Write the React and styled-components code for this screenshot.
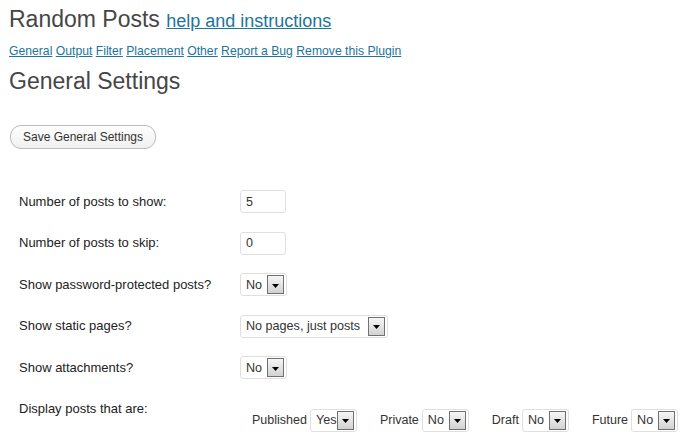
import React from 'react';
import styled, { createGlobalStyle } from 'styled-components';

const GlobalStyle = createGlobalStyle`
  body {
    margin: 0;
    background: #fff;
    font-family: "Liberation Sans", Arial, sans-serif;
    color: #333;
  }
`;

const Wrap = styled.div`
  padding: 5px 0 0 9px;
`;

const Title = styled.h2`
  margin: 0;
  font-size: 23px;
  line-height: 29px;
  font-weight: normal;
  color: #464646;
`;

const HelpLink = styled.a`
  font-size: 18px;
  color: #21759b;
  text-decoration: underline;
`;

const Nav = styled.div`
  margin-top: 7px;
  font-size: 12.2px;
  line-height: 16px;
`;

const NavLink = styled.a`
  color: #21759b;
  text-decoration: underline;
`;

const Heading = styled(Title)`
  margin-top: 8px;
`;

const SaveButton = styled.button`
  display: block;
  margin: 29px 0 0 1px;
  width: 146px;
  height: 24px;
  padding: 0;
  box-sizing: border-box;
  border: 1px solid #bbb;
  border-radius: 11px;
  background: linear-gradient(#fefefe, #f0f0f0);
  font: 12px "Liberation Sans", Arial, sans-serif;
  color: #333;
`;

const Form = styled.div`
  margin-top: 32px;
`;

const Row = styled.div`
  display: flex;
  align-items: ${p => (p.$top ? 'flex-start' : 'center')};
  height: ${p => (p.$top ? 'auto' : '41.5px')};
`;

const Label = styled.div`
  width: 231px;
  box-sizing: border-box;
  padding-left: 10px;
  padding-top: ${p => (p.$top ? '12.5px' : '0')};
  font-size: 13px;
  line-height: 16px;
  color: #222;
`;

const Control = styled.div`
  padding-top: ${p => (p.$top ? '20px' : '0')};
`;

const TextInput = styled.input`
  display: block;
  width: 46px;
  height: 23px;
  box-sizing: border-box;
  border: 1px solid #dfdfdf;
  border-radius: 3px;
  padding: 0 5px;
  font: 12.5px "Liberation Sans", Arial, sans-serif;
  color: #333;
  outline: none;
`;

const SelectBox = styled.div`
  display: inline-flex;
  align-items: center;
  box-sizing: border-box;
  width: ${p => p.$w}px;
  height: 23px;
  border: 1px solid #dfdfdf;
  border-radius: 3px;
  padding: 1px 2px 1px 5px;
  background: #fff;
  font-size: 12.6px;
  color: #333;
`;

const SelectText = styled.span`
  flex: 1;
  min-width: 0;
  white-space: nowrap;
  overflow: hidden;
`;

const ArrowBox = styled.span`
  flex: none;
  display: flex;
  align-items: center;
  justify-content: center;
  width: 17px;
  height: 19px;
  box-sizing: border-box;
  border: 1px solid #707070;
  background: linear-gradient(#f6f6f6, #d2d2d2);
  padding-top: 2px;
`;

const StatusRow = styled.div`
  display: flex;
  align-items: center;
  gap: 23px;
  padding-left: 12px;
`;

const StatusGroup = styled.div`
  display: flex;
  align-items: center;
  gap: 3px;
  font-size: 12.5px;
  color: #333;
`;

function Select({ value, width = 47 }) {
  return (
    <SelectBox $w={width}>
      <SelectText>{value}</SelectText>
      <ArrowBox>
        <svg width="7" height="4" viewBox="0 0 7 4">
          <polygon points="0,0 7,0 3.5,4" fill="#000" />
        </svg>
      </ArrowBox>
    </SelectBox>
  );
}

const navItems = ['General', 'Output', 'Filter', 'Placement', 'Other', 'Report a Bug', 'Remove this Plugin'];

const statuses = [
  ['Published', 'Yes'],
  ['Private', 'No'],
  ['Draft', 'No'],
  ['Future', 'No'],
];

export default function App() {
  return (
    <Wrap>
      <GlobalStyle />
      <Title>
        Random Posts <HelpLink href="#">help and instructions</HelpLink>
      </Title>
      <Nav>
        {navItems.map((item, i) => (
          <React.Fragment key={item}>
            {i > 0 && ' '}
            <NavLink href="#">{item}</NavLink>
          </React.Fragment>
        ))}
      </Nav>
      <Heading>General Settings</Heading>
      <SaveButton>Save General Settings</SaveButton>

      <Form>
        <Row>
          <Label>Number of posts to show:</Label>
          <Control><TextInput defaultValue="5" /></Control>
        </Row>
        <Row>
          <Label>Number of posts to skip:</Label>
          <Control><TextInput defaultValue="0" /></Control>
        </Row>
        <Row>
          <Label>Show password-protected posts?</Label>
          <Control><Select value="No" /></Control>
        </Row>
        <Row>
          <Label>Show static pages?</Label>
          <Control><Select value="No pages, just posts" width={148} /></Control>
        </Row>
        <Row>
          <Label>Show attachments?</Label>
          <Control><Select value="No" /></Control>
        </Row>
        <Row $top>
          <Label $top>Display posts that are:</Label>
          <Control $top>
            <StatusRow>
              {statuses.map(([name, val]) => (
                <StatusGroup key={name}>
                  {name}
                  <Select value={val} />
                </StatusGroup>
              ))}
            </StatusRow>
          </Control>
        </Row>
      </Form>
    </Wrap>
  );
}
